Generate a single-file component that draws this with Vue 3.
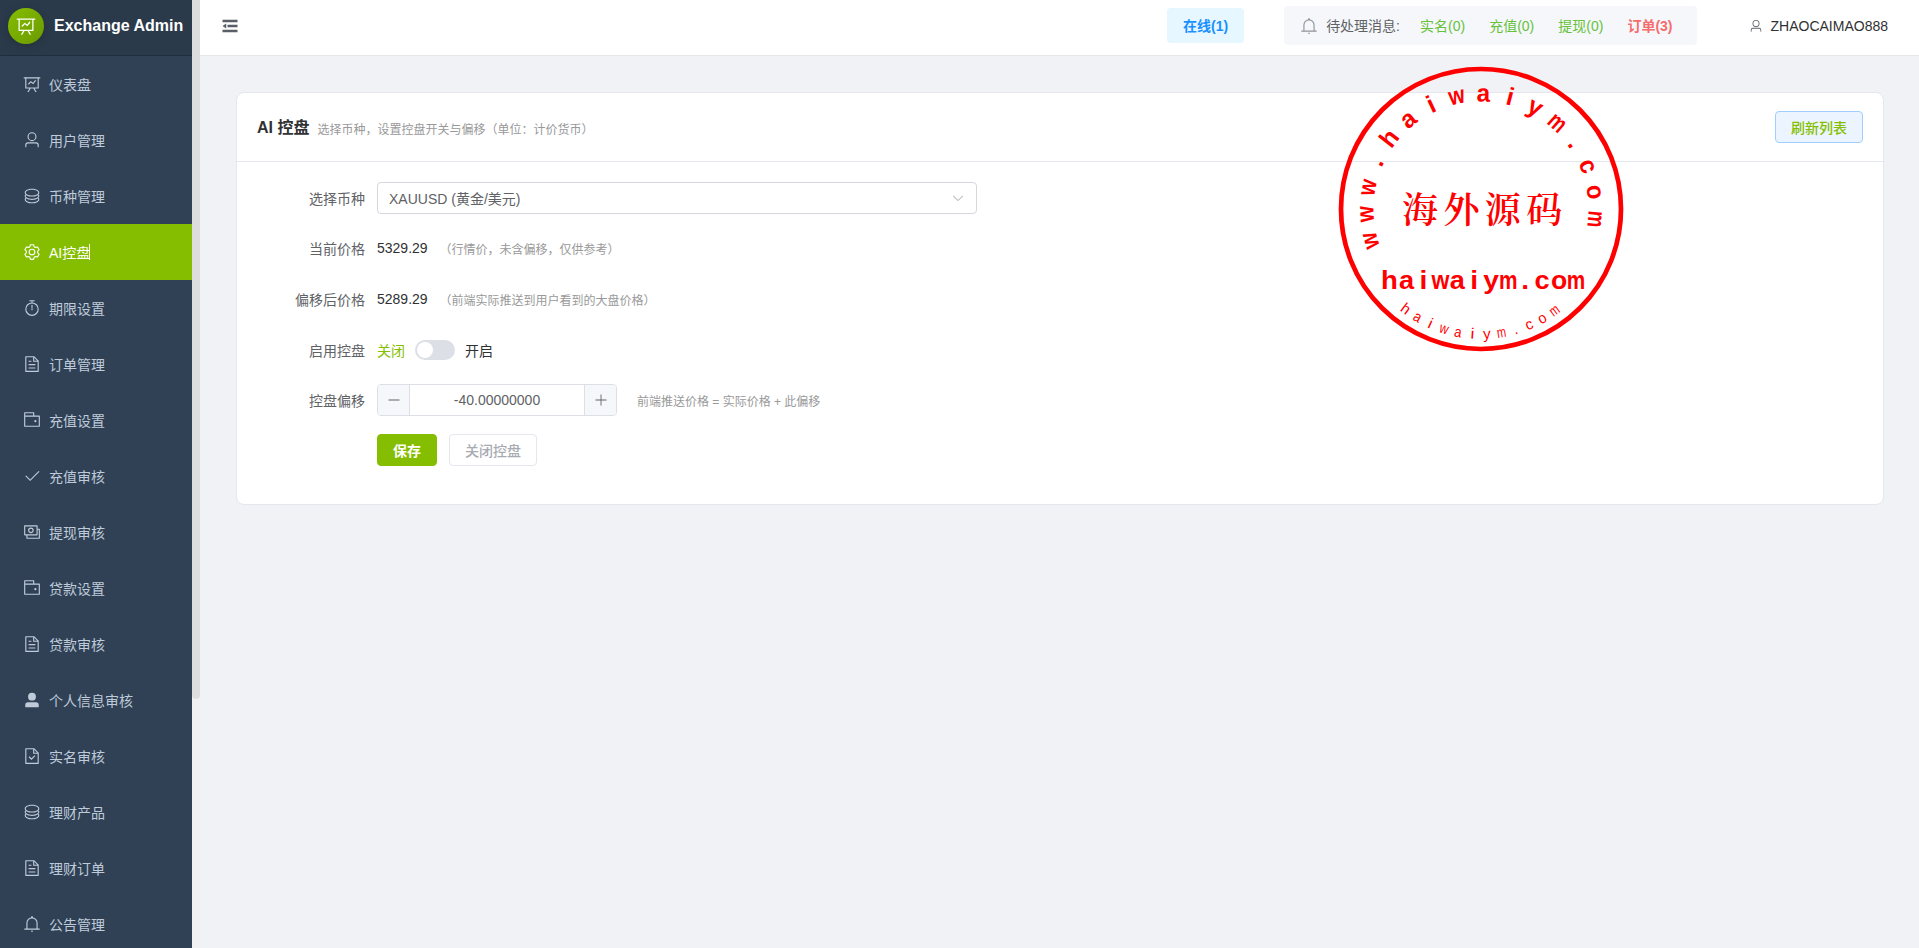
<template>
    <div class="layout">
        <aside class="sidebar">
            <div class="logo">
                <span class="logo-badge">
                    <svg class="icon" viewBox="0 0 1024 1024"><path :d="icons.dataLine" /></svg>
                </span>
                <span class="logo-title">Exchange Admin</span>
            </div>
            <ul class="menu">
                <li v-for="item in menu" :key="item.label" class="menu-item"
                    :class="{ active: item.label === activeItem }" @click="activeItem = item.label">
                    <span class="menu-icon">
                        <svg class="icon" viewBox="0 0 1024 1024"><path :d="icons[item.icon]" /></svg>
                    </span>
                    <span class="menu-label">{{ item.label }}</span>
                </li>
            </ul>
        </aside>
        <div class="scrollbar"><div class="scrollbar-thumb"></div></div>

        <div class="main">
            <header class="header">
                <svg class="icon fold" viewBox="0 0 1024 1024"><path :d="icons.fold" /></svg>
                <div class="online">在线(1)</div>
                <div class="messages">
                    <svg class="icon" viewBox="0 0 1024 1024"><path :d="icons.bell" /></svg>
                    <span class="messages-label">待处理消息:</span>
                    <span v-for="{ label, count } in messages" :key="label" class="message"
                        :class="{ pending: count > 0 }">{{ label }}({{ count }})</span>
                </div>
                <div class="user">
                    <svg class="icon" viewBox="0 0 1024 1024"><path :d="icons.user" /></svg>
                    <span>ZHAOCAIMAO888</span>
                </div>
            </header>

            <section class="card">
                <div class="card-header">
                    <h1>AI 控盘</h1>
                    <span class="subtitle">选择币种，设置控盘开关与偏移（单位：计价货币）</span>
                    <button class="btn btn-plain">刷新列表</button>
                </div>
                <form class="form" @submit.prevent>
                    <div class="row">
                        <label>选择币种</label>
                        <div class="select">
                            <span>XAUUSD (黄金/美元)</span>
                            <svg class="icon" viewBox="0 0 1024 1024"><path :d="icons.arrowDown" /></svg>
                        </div>
                    </div>
                    <div class="row row-text">
                        <label>当前价格</label>
                        <span>{{ price.toFixed(2) }}</span>
                        <span class="hint">（行情价，未含偏移，仅供参考）</span>
                    </div>
                    <div class="row row-text">
                        <label>偏移后价格</label>
                        <span>{{ shiftedPrice }}</span>
                        <span class="hint">（前端实际推送到用户看到的大盘价格）</span>
                    </div>
                    <div class="row">
                        <label>启用控盘</label>
                        <span :class="{ chosen: !enabled }">关闭</span>
                        <span class="switch" :class="{ on: enabled }" @click="enabled = !enabled"></span>
                        <span :class="{ chosen: enabled }">开启</span>
                    </div>
                    <div class="row">
                        <label>控盘偏移</label>
                        <div class="number">
                            <span class="step" @click="offset--">
                                <svg class="icon" viewBox="0 0 1024 1024"><path :d="icons.minus" /></svg>
                            </span>
                            <span class="number-value">{{ offset.toFixed(8) }}</span>
                            <span class="step" @click="offset++">
                                <svg class="icon" viewBox="0 0 1024 1024"><path :d="icons.plus" /></svg>
                            </span>
                        </div>
                        <span class="hint hint-offset">前端推送价格 = 实际价格 + 此偏移</span>
                    </div>
                    <div class="row row-actions">
                        <button class="btn btn-primary">保存</button>
                        <button class="btn btn-disabled">关闭控盘</button>
                    </div>
                </form>
            </section>
        </div>

        <svg class="stamp" viewBox="-145 -145 290 290">
            <circle r="140" />
            <text v-for="(g, i) in topGlyphs" :key="'t' + i" class="bold" font-size="25" :transform="g.transform"
                :textLength="g.width" lengthAdjust="spacingAndGlyphs">{{ g.char }}</text>
            <text v-for="(char, i) in '海外源码'" :key="char" class="name" :x="-61 + i * 41.4" y="13.5">{{ char }}</text>
            <text v-for="(g, i) in lineGlyphs" :key="'l' + i" class="bold" font-size="26.5" :transform="g.transform"
                :textLength="g.width" lengthAdjust="spacingAndGlyphs">{{ g.char }}</text>
            <text v-for="(g, i) in bottomGlyphs" :key="'b' + i" font-size="15" :transform="g.transform"
                :textLength="g.width" lengthAdjust="spacingAndGlyphs">{{ g.char }}</text>
        </svg>
    </div>
</template>

<script setup>
import { ref, computed } from 'vue';

const icons = {
    dataLine: 'M359.168 768H160a32 32 0 0 1-32-32V192H64a32 32 0 0 1 0-64h896a32 32 0 1 1 0 64h-64v544a32 32 0 0 1-32 32H665.216l110.848 192h-73.856L591.36 768H433.024L322.176 960H248.32zM832 192H192v512h640zM342.656 534.656a32 32 0 1 1-45.312-45.312L444.992 341.76l125.44 94.08L679.04 300.032a32 32 0 1 1 49.92 39.936L581.632 524.224 451.008 426.24 342.656 534.592z',
    user: 'M512 512a192 192 0 1 0 0-384 192 192 0 0 0 0 384m0 64a256 256 0 1 1 0-512 256 256 0 0 1 0 512m320 320v-96a96 96 0 0 0-96-96H288a96 96 0 0 0-96 96v96a32 32 0 1 1-64 0v-96a160 160 0 0 1 160-160h448a160 160 0 0 1 160 160v96a32 32 0 1 1-64 0',
    coin: 'm161.92 580.736 29.888 58.88C171.328 659.776 160 681.728 160 704c0 82.304 155.328 160 352 160s352-77.696 352-160c0-22.272-11.392-44.16-31.808-64.32l30.464-58.432C903.936 615.808 928 657.664 928 704c0 129.728-188.544 224-416 224S96 833.728 96 704c0-46.592 24.32-88.576 65.92-123.264zM161.92 388.736l29.888 58.88C171.328 467.84 160 489.792 160 512c0 82.304 155.328 160 352 160s352-77.696 352-160c0-22.272-11.392-44.16-31.808-64.32l30.464-58.432C903.936 423.808 928 465.664 928 512c0 129.728-188.544 224-416 224S96 641.728 96 512c0-46.592 24.32-88.576 65.92-123.264zM512 544c-227.456 0-416-94.272-416-224S284.544 96 512 96s416 94.272 416 224-188.544 224-416 224m0-64c196.672 0 352-77.696 352-160S708.672 160 512 160s-352 77.696-352 160 155.328 160 352 160',
    setting: 'M600.704 64a32 32 0 0 1 30.464 22.208l35.2 109.376c14.784 7.232 28.928 15.36 42.432 24.512l112.384-24.192a32 32 0 0 1 34.432 15.36L944.32 364.8a32 32 0 0 1-4.032 37.504l-77.12 85.12a357.12 357.12 0 0 1 0 49.024l77.12 85.248a32 32 0 0 1 4.032 37.504l-88.704 153.6a32 32 0 0 1-34.432 15.296L708.8 803.904c-13.44 9.088-27.648 17.28-42.368 24.512l-35.264 109.376A32 32 0 0 1 600.704 960H423.296a32 32 0 0 1-30.464-22.208L357.696 828.48a351.616 351.616 0 0 1-42.56-24.64l-112.32 24.256a32 32 0 0 1-34.432-15.36L79.68 659.2a32 32 0 0 1 4.032-37.504l77.12-85.248a357.12 357.12 0 0 1 0-48.896l-77.12-85.248A32 32 0 0 1 79.68 364.8l88.704-153.6a32 32 0 0 1 34.432-15.296l112.32 24.256c13.568-9.152 27.776-17.408 42.56-24.64l35.2-109.312A32 32 0 0 1 423.232 64H600.64zm-23.424 64H446.72l-36.352 113.088-24.512 11.968a294.113 294.113 0 0 0-34.816 20.096l-22.656 15.36-116.224-25.088-65.28 113.152 79.68 88.192-1.92 27.136a293.12 293.12 0 0 0 0 40.192l1.92 27.136-79.808 88.192 65.344 113.152 116.224-25.024 22.656 15.296a294.113 294.113 0 0 0 34.816 20.096l24.512 11.968L446.72 896h130.688l36.48-113.152 24.448-11.904a288.282 288.282 0 0 0 34.752-20.096l22.592-15.296 116.288 25.024 65.28-113.152-79.744-88.192 1.92-27.136a293.12 293.12 0 0 0 0-40.256l-1.92-27.136 79.808-88.128-65.344-113.152-116.288 24.96-22.592-15.232a287.616 287.616 0 0 0-34.752-20.096l-24.448-11.904L577.344 128zM512 320a192 192 0 1 1 0 384 192 192 0 0 1 0-384m0 64a128 128 0 1 0 0 256 128 128 0 0 0 0-256',
    timer: 'M512 896a320 320 0 1 0 0-640 320 320 0 0 0 0 640m0 64a384 384 0 1 1 0-768 384 384 0 0 1 0 768M512 320a32 32 0 0 1 32 32l-.512 224a32 32 0 1 1-64 0L480 352a32 32 0 0 1 32-32M448 576a64 64 0 1 0 128 0 64 64 0 1 0-128 0m96-448v128h-64V128h-96a32 32 0 0 1 0-64h256a32 32 0 1 1 0 64z',
    document: 'M832 384H576V128H192v768h640zm-26.496-64L640 154.496V320zM160 64h480l256 256v608a32 32 0 0 1-32 32H160a32 32 0 0 1-32-32V96a32 32 0 0 1 32-32m160 448h384v64H320zm0-192h160v64H320zm0 384h384v64H320z',
    wallet: 'M640 288h-64V128H128v704h384v32a32 32 0 0 0 32 32H96a32 32 0 0 1-32-32V96a32 32 0 0 1 32-32h512a32 32 0 0 1 32 32zM128 320v512h768V320zm-32-64h832a32 32 0 0 1 32 32v576a32 32 0 0 1-32 32H96a32 32 0 0 1-32-32V288a32 32 0 0 1 32-32M704 640a64 64 0 1 1 0-128 64 64 0 0 1 0 128',
    check: 'M406.656 706.944 195.84 496.256a32 32 0 1 0-45.248 45.248l256 256 512-512a32 32 0 0 0-45.248-45.248L406.592 706.944z',
    money: 'M256 640v192h640V384H768v-64h150.976c14.272 0 19.456 1.472 24.64 4.288a29.056 29.056 0 0 1 12.16 12.096c2.752 5.184 4.224 10.368 4.224 24.64v493.952c0 14.272-1.472 19.456-4.288 24.64a29.056 29.056 0 0 1-12.096 12.16c-5.184 2.752-10.368 4.224-24.64 4.224H233.024c-14.272 0-19.456-1.472-24.64-4.288a29.056 29.056 0 0 1-12.16-12.096c-2.688-5.184-4.224-10.368-4.224-24.576V640zM768 192H128v448h640zm64-22.976v493.952c0 14.272-1.472 19.456-4.288 24.64a29.056 29.056 0 0 1-12.096 12.16c-5.184 2.752-10.368 4.224-24.64 4.224H105.024c-14.272 0-19.456-1.472-24.64-4.288a29.056 29.056 0 0 1-12.16-12.096C65.536 682.432 64 677.248 64 663.04V169.024c0-14.272 1.472-19.456 4.288-24.64a29.056 29.056 0 0 1 12.096-12.16C85.568 129.536 90.752 128 104.96 128h685.952c14.272 0 19.456 1.472 24.64 4.288a29.056 29.056 0 0 1 12.16 12.096c2.752 5.184 4.224 10.368 4.224 24.64zM448 576a160 160 0 1 1 0-320 160 160 0 0 1 0 320m0-64a96 96 0 1 0 0-192 96 96 0 0 0 0 192',
    userFilled: 'M288 320a224 224 0 1 0 448 0 224 224 0 1 0-448 0m544 608H160a32 32 0 0 1-32-32v-96a160 160 0 0 1 160-160h448a160 160 0 0 1 160 160v96a32 32 0 0 1-32 32z',
    documentChecked: 'M805.504 320 640 154.496V320zM832 384H576V128H192v768h640zM160 64h480l256 256v608a32 32 0 0 1-32 32H160a32 32 0 0 1-32-32V96a32 32 0 0 1 32-32m318.4 582.144 180.992-180.992L704.64 510.4 478.4 736.64 320 578.304l45.248-45.312z',
    bell: 'M512 64a64 64 0 0 1 64 64v64H448v-64a64 64 0 0 1 64-64M256 768h512V448a256 256 0 1 0-512 0zm256-640a320 320 0 0 1 320 320v384H192V448a320 320 0 0 1 320-320M96 768h832q32 0 32 32t-32 32H96q-32 0-32-32t32-32m352 128h128a64 64 0 0 1-128 0',
    fold: 'M896 192H128v128h768zm0 256H384v128h512zm0 256H128v128h768zM320 384 128 512l192 128z',
    arrowDown: 'M831.872 340.864 512 652.672 192.128 340.864a30.592 30.592 0 0 0-42.752 0 29.12 29.12 0 0 0 0 41.6L489.664 714.24a32 32 0 0 0 44.672 0l340.288-331.712a29.12 29.12 0 0 0 0-41.728 30.592 30.592 0 0 0-42.752 0z',
    minus: 'M128 544h768a32 32 0 1 0 0-64H128a32 32 0 0 0 0 64',
    plus: 'M480 480V128a32 32 0 0 1 64 0v352h352a32 32 0 1 1 0 64H544v352a32 32 0 1 1-64 0V544H128a32 32 0 0 1 0-64z'
};

const menu = [
    { label: '仪表盘', icon: 'dataLine' },
    { label: '用户管理', icon: 'user' },
    { label: '币种管理', icon: 'coin' },
    { label: 'AI控盘', icon: 'setting' },
    { label: '期限设置', icon: 'timer' },
    { label: '订单管理', icon: 'document' },
    { label: '充值设置', icon: 'wallet' },
    { label: '充值审核', icon: 'check' },
    { label: '提现审核', icon: 'money' },
    { label: '贷款设置', icon: 'wallet' },
    { label: '贷款审核', icon: 'document' },
    { label: '个人信息审核', icon: 'userFilled' },
    { label: '实名审核', icon: 'documentChecked' },
    { label: '理财产品', icon: 'coin' },
    { label: '理财订单', icon: 'document' },
    { label: '公告管理', icon: 'bell' }
];
const activeItem = ref('AI控盘');

const messages = ref([
    { label: '实名', count: 0 },
    { label: '充值', count: 0 },
    { label: '提现', count: 0 },
    { label: '订单', count: 3 }
]);

const price = ref(5329.29);
const offset = ref(-40);
const enabled = ref(false);
const shiftedPrice = computed(() => (price.value + offset.value).toFixed(2));

// Stamp lettering: every glyph sits in an equal cell, squeezed to these widths
const widths = { w: 16, h: 15, a: 13.5, i: 7, y: 14, m: 16.5, c: 13.5, o: 14.5, '.': 7 };

const topGlyphs = [...'www.haiwaiym.com'].map((char, i) => ({
    char,
    width: widths[char],
    transform: `rotate(${-106 + i * 13.4}) translate(0 -107.5)`
}));
const lineGlyphs = [...'haiwaiym.com'].map((char, i) => ({
    char,
    width: widths[char] * 1.12,
    transform: `translate(${-91.5 + i * 16.95} 80)`
}));
const bottomGlyphs = [...'haiwaiym.com'].map((char, i) => ({
    char,
    width: widths[char] * 0.55,
    transform: `rotate(${37 - i * 6.62}) translate(0 130)`
}));
</script>

<style>
body {
    overflow: hidden;
}
</style>

<style scoped>
.layout {
    position: relative;
    display: flex;
    width: 1920px;
    height: 948px;
    overflow: hidden;
    background: #f0f2f5;
    color: #303133;
    font-family: "Liberation Sans", "Noto Sans CJK SC", sans-serif;
    font-size: 14px;
}

.icon {
    display: block;
    flex: none;
    width: 1em;
    height: 1em;
    fill: currentColor;
}

/* Sidebar */
.sidebar {
    flex: none;
    width: 192px;
    overflow: hidden;
    background: #304156;
}

.logo {
    display: flex;
    align-items: center;
    gap: 10px;
    box-sizing: border-box;
    height: 56px;
    padding: 0 8px 3px;
    border-bottom: 1px solid #1f2d3d;
    background: #2b3a4a;
}

.logo-badge {
    display: flex;
    align-items: center;
    justify-content: center;
    width: 36px;
    height: 36px;
    border-radius: 50%;
    background: linear-gradient(135deg, #85be00, #6b9900);
    box-shadow: 0 2px 8px rgba(0, 0, 0, .2);
    color: #fff;
    font-size: 20px;
}

.logo-title {
    color: #fff;
    font-size: 16px;
    font-weight: 700;
    white-space: nowrap;
}

.menu {
    margin: 0;
    padding: 0;
    list-style: none;
}

.menu-item {
    display: flex;
    align-items: center;
    gap: 5px;
    height: 56px;
    padding: 0 20px;
    color: #bfcbd9;
    cursor: pointer;
}

.menu-item.active {
    background: #85be00;
    color: #fff;
}

.menu-icon {
    display: flex;
    justify-content: center;
    width: 24px;
    font-size: 18px;
}

.menu-label {
    position: relative;
    padding-bottom: 1px;
}

.active .menu-label::after {
    content: "";
    position: absolute;
    top: 2px;
    right: 0;
    width: 1px;
    height: 16px;
    background: #fff;
}

.scrollbar {
    flex: none;
    width: 8px;
    background: #f1f1f1;
}

.scrollbar-thumb {
    height: 699px;
    border-radius: 0 0 4px 4px;
    background: #ddd;
}

/* Header */
.main {
    flex: 1;
    min-width: 0;
}

.header {
    display: flex;
    align-items: center;
    box-sizing: border-box;
    height: 56px;
    padding: 0 32px 4px 20px;
    border-bottom: 1px solid #e6e6e6;
    background: #fff;
}

.fold {
    margin-right: auto;
    color: #5a5e66;
    font-size: 20px;
}

.online {
    height: 35px;
    margin-right: 40px;
    padding: 0 16px;
    border-radius: 4px;
    background: #e6f7ff;
    color: #1890ff;
    font-weight: 700;
    line-height: 36px;
}

.messages {
    display: flex;
    align-items: center;
    height: 39px;
    margin-right: 52px;
    padding-left: 16px;
    border-radius: 4px;
    background: #f5f7fa;
    color: #606266;
}

.messages span {
    padding-bottom: 1px;
}

.messages .icon {
    margin-right: 8px;
    color: #909399;
    font-size: 18px;
}

.messages-label {
    margin-right: 20px;
}

.message {
    margin-right: 24px;
    color: #67c23a;
}

.message.pending {
    color: #f56c6c;
    font-weight: 700;
}

.user {
    display: flex;
    align-items: center;
    gap: 8px;
}

.user .icon {
    color: #606266;
    font-size: 14px;
}

/* Card */
.card {
    box-sizing: border-box;
    margin: 36px;
    border: 1px solid #e4e7ed;
    border-radius: 8px;
    background: #fff;
}

.card-header {
    display: flex;
    align-items: center;
    padding: 18px 20px;
    border-bottom: 1px solid #e4e7ed;
}

h1 {
    margin: 2px 8px 0 0;
    font-size: 16px;
    font-weight: 700;
    line-height: 24px;
}

.subtitle,
.hint {
    color: #999;
    font-size: 12px;
    white-space: nowrap;
}

.subtitle {
    margin-top: 3px;
}

.card-header .btn {
    margin-left: auto;
}

.btn {
    box-sizing: border-box;
    height: 32px;
    padding: 0 15px;
    border: 1px solid #dcdfe6;
    border-radius: 4px;
    font-family: inherit;
    font-size: 14px;
    font-weight: 500;
}

.btn-plain {
    border-color: #a0cfff;
    background: #ecf5ff;
    color: #85be00;
}

.btn-primary {
    border-color: #85be00;
    background: #85be00;
    color: #fff;
    font-weight: 700;
}

.btn-disabled {
    border-color: #e4e7ed;
    background: #fff;
    color: #a8abb2;
}

.form {
    padding: 20px;
}

.row {
    display: flex;
    align-items: center;
    height: 32px;
    margin-bottom: 18px;
}

/* Plain text rows come out one pixel taller */
.row-text {
    padding-bottom: 1px;
}

.row-actions {
    gap: 12px;
    padding-left: 120px;
}

label {
    box-sizing: border-box;
    width: 120px;
    padding: 0 12px 1px 0;
    color: #606266;
    text-align: right;
}

.hint {
    margin-left: 12px;
}

.hint-offset {
    margin-left: 20px;
}

.chosen {
    color: #85be00;
}

.select {
    display: flex;
    align-items: center;
    justify-content: space-between;
    box-sizing: border-box;
    width: 600px;
    height: 32px;
    padding: 0 11px;
    border: 1px solid #d4d7e0;
    border-radius: 4px;
    color: #606266;
}

.select .icon {
    color: #a8abb2;
}

.switch {
    box-sizing: border-box;
    width: 40px;
    height: 20px;
    margin: 0 10px;
    padding: 2px;
    border-radius: 10px;
    background: #dcdfe6;
}

.switch::before {
    content: "";
    display: block;
    width: 16px;
    height: 16px;
    border-radius: 50%;
    background: #fff;
}

.switch.on {
    padding-left: 22px;
    background: #85be00;
}

.number {
    display: flex;
    box-sizing: border-box;
    width: 240px;
    height: 32px;
    overflow: hidden;
    border: 1px solid #dcdfe6;
    border-radius: 4px;
    color: #606266;
}

.step {
    display: flex;
    align-items: center;
    justify-content: center;
    width: 31px;
    background: #f5f7fa;
    cursor: pointer;
}

.number-value {
    flex: 1;
    border: solid #dcdfe6;
    border-width: 0 1px;
    line-height: 31px;
    text-align: center;
}

/* Round stamp lying over the page */
.stamp {
    position: absolute;
    top: 64.4px;
    left: 1336.4px;
    width: 290px;
    height: 290px;
    fill: red;
    text-anchor: middle;
    pointer-events: none;
}

.stamp circle {
    fill: none;
    stroke: red;
    stroke-width: 4.7;
}

.stamp .bold {
    font-weight: 700;
}

.stamp .name {
    font-family: KaiTi, STKaiti, "Noto Serif CJK SC", "Noto Sans CJK SC", serif;
    font-size: 36px;
    font-weight: 600;
}
</style>
